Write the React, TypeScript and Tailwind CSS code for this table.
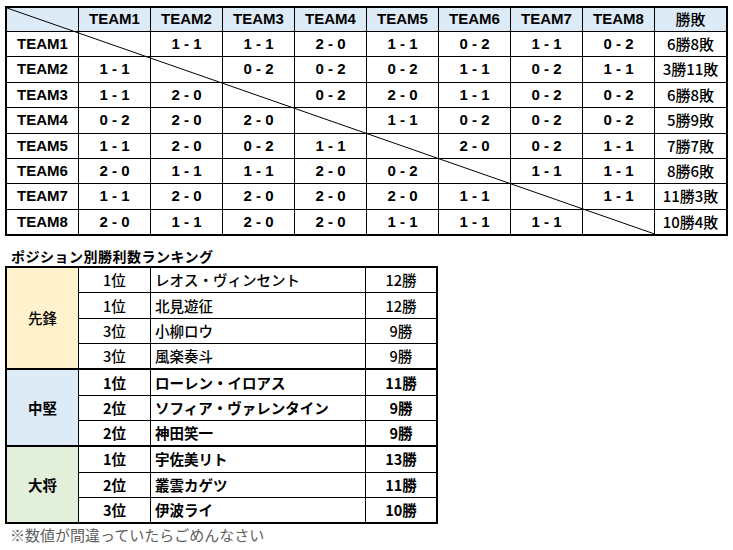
import React from 'react'

const teams = ['TEAM1', 'TEAM2', 'TEAM3', 'TEAM4', 'TEAM5', 'TEAM6', 'TEAM7', 'TEAM8']

// null = 対角セル（自チーム同士）
const results: (string | null)[][] = [
  [null, '1 - 1', '1 - 1', '2 - 0', '1 - 1', '0 - 2', '1 - 1', '0 - 2'],
  ['1 - 1', null, '0 - 2', '0 - 2', '0 - 2', '1 - 1', '0 - 2', '1 - 1'],
  ['1 - 1', '2 - 0', null, '0 - 2', '2 - 0', '1 - 1', '0 - 2', '0 - 2'],
  ['0 - 2', '2 - 0', '2 - 0', null, '1 - 1', '0 - 2', '0 - 2', '0 - 2'],
  ['1 - 1', '2 - 0', '0 - 2', '1 - 1', null, '2 - 0', '0 - 2', '1 - 1'],
  ['2 - 0', '1 - 1', '1 - 1', '2 - 0', '0 - 2', null, '1 - 1', '1 - 1'],
  ['1 - 1', '2 - 0', '2 - 0', '2 - 0', '2 - 0', '1 - 1', null, '1 - 1'],
  ['2 - 0', '1 - 1', '2 - 0', '2 - 0', '1 - 1', '1 - 1', '1 - 1', null],
]

const records = ['6勝8敗', '3勝11敗', '6勝8敗', '5勝9敗', '7勝7敗', '8勝6敗', '11勝3敗', '10勝4敗']

const groups = [
  {
    name: '先鋒',
    bg: 'bg-[#fff2cc]',
    weight: 'font-medium',
    rows: [
      ['1位', 'レオス・ヴィンセント', '12勝'],
      ['1位', '北見遊征', '12勝'],
      ['3位', '小柳ロウ', '9勝'],
      ['3位', '風楽奏斗', '9勝'],
    ],
  },
  {
    name: '中堅',
    bg: 'bg-[#ddebf7]',
    weight: 'font-bold',
    rows: [
      ['1位', 'ローレン・イロアス', '11勝'],
      ['2位', 'ソフィア・ヴァレンタイン', '9勝'],
      ['2位', '神田笑一', '9勝'],
    ],
  },
  {
    name: '大将',
    bg: 'bg-[#e2efda]',
    weight: 'font-bold',
    rows: [
      ['1位', '宇佐美リト', '13勝'],
      ['2位', '叢雲カゲツ', '11勝'],
      ['3位', '伊波ライ', '10勝'],
    ],
  },
]

const cell = 'flex items-center justify-center'

export default function App() {
  return (
    <div className="w-[733px] h-[550px] bg-white pl-[5px] pt-[6px] text-black font-['Liberation_Sans','Noto_Sans_CJK_JP',sans-serif]">
      {/* 対戦表 */}
      <div className="relative w-fit grid grid-cols-[repeat(10,71px)] grid-rows-[23px_repeat(8,24.4px)] gap-px bg-black border-2 border-black">
        <div className="bg-[#ddebf7]" />
        {teams.map((t) => (
          <div key={t} className={`${cell} bg-[#ddebf7] text-[15px] font-bold`}>
            {t}
          </div>
        ))}
        <div className={`${cell} bg-[#ddebf7] text-[15px] font-medium font-['Noto_Sans_CJK_JP',sans-serif]`}>勝敗</div>

        {teams.map((t, i) => (
          <React.Fragment key={t}>
            <div className={`${cell} bg-white text-[15px] font-bold`}>{t}</div>
            {results[i].map((r, j) => (
              <div key={j} className={`${cell} bg-white text-[15px] font-bold`}>
                {r}
              </div>
            ))}
            <div className={`${cell} bg-white text-[15px] font-medium font-['Noto_Sans_CJK_JP',sans-serif]`}>
              {records[i]}
            </div>
          </React.Fragment>
        ))}

        <svg className="absolute left-0 top-0 pointer-events-none" width="648" height="100%">
          <line x1="0" y1="0" x2="648" y2="100%" stroke="#000" strokeWidth="1" />
        </svg>
      </div>

      {/* ランキング */}
      <div className="pt-[12px] pb-[2px] pl-[6px] leading-[16px] text-[14px] font-bold tracking-[0.5px] font-['Noto_Sans_CJK_JP',sans-serif]">
        ポジション別勝利数ランキング
      </div>

      <div className="w-fit border-2 border-black font-['Noto_Sans_CJK_JP',sans-serif] text-[14.5px]">
        {groups.map((g, i) => (
          <div key={g.name} className={`flex ${i > 0 ? 'border-t-2 border-black' : ''} ${g.weight}`}>
            <div className={`${cell} w-[72px] border-r border-black ${g.bg}`}>{g.name}</div>
            <div className="flex flex-col divide-y divide-black">
              {g.rows.map((r, k) => (
                <div key={k} className="grid grid-cols-[72px_215px_70px] divide-x divide-black">
                  <div className={`${cell} h-[24.3px]`}>{r[0]}</div>
                  <div className="h-[24.3px] flex items-center pl-[4px]">{r[1]}</div>
                  <div className={`${cell} h-[24.3px]`}>{r[2]}</div>
                </div>
              ))}
            </div>
          </div>
        ))}
      </div>

      <div className="pt-[3px] pl-[5px] leading-[16px] text-[15px] text-[#5f5f5f] font-['Noto_Sans_CJK_JP',sans-serif]">
        ※数値が間違っていたらごめんなさい
      </div>
    </div>
  )
}
